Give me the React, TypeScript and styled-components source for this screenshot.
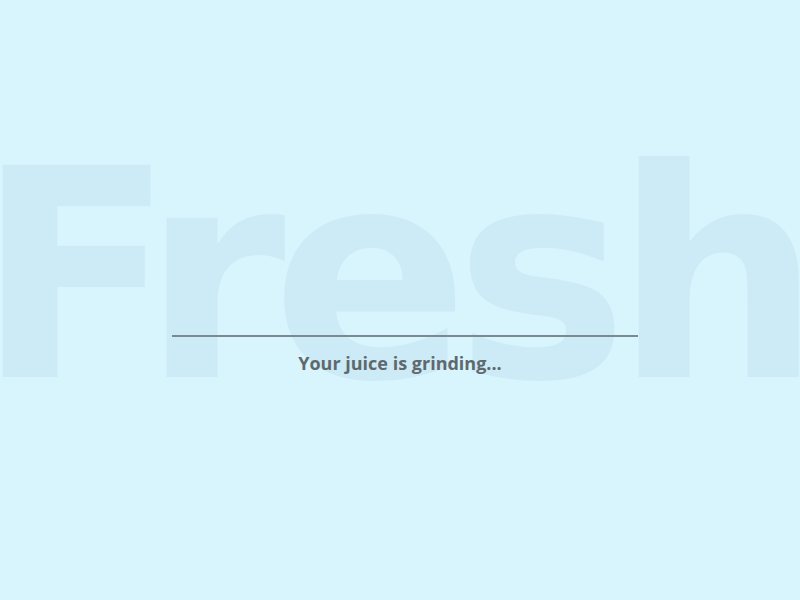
import React from "react";
import styled, {createGlobalStyle} from "styled-components";

const GlobalStyle = createGlobalStyle`
  html, body {
    margin: 0;
    padding: 0;
    background: #d8f5fe;
  }
  #root {
    height: 100vh;
  }
`;

const Screen = styled.main`
    position: relative;
    width: 100%;
    height: 100vh;
    overflow: hidden;
    background: #d8f5fe;
    display: flex;
    flex-direction: column;
    align-items: center;
`;

// huge watermark word sitting behind the loader
const Backdrop = styled.div`
    position: absolute;
    left: -24px;
    top: 131px;
    white-space: nowrap;
    font-family: "DejaVu Sans", sans-serif;
    font-weight: 700;
    font-size: 291px;
    line-height: 1;
    letter-spacing: -14px;
    color: #cdebf6;
    user-select: none;
`;

const Loader = styled.section`
    position: relative;
    margin-top: 335px;
    padding-left: 10px;
    width: 466px;
    display: flex;
    flex-direction: column;
    align-items: center;
`;

const Bar = styled.div`
    width: 100%;
    height: 2px;
    background: #7c8a90;
`;

const Caption = styled.p`
    margin: 14px 0 0 -10px;
    font-family: "Open Sans", sans-serif;
    font-weight: 700;
    font-size: 18px;
    color: #5f696d;
`;

const App: React.FC = () => {
    return (
        <Screen>
            <GlobalStyle/>
            <Backdrop aria-hidden>Fresh</Backdrop>
            <Loader>
                <Bar/>
                <Caption>Your juice is grinding...</Caption>
            </Loader>
        </Screen>
    )
}

export default App
